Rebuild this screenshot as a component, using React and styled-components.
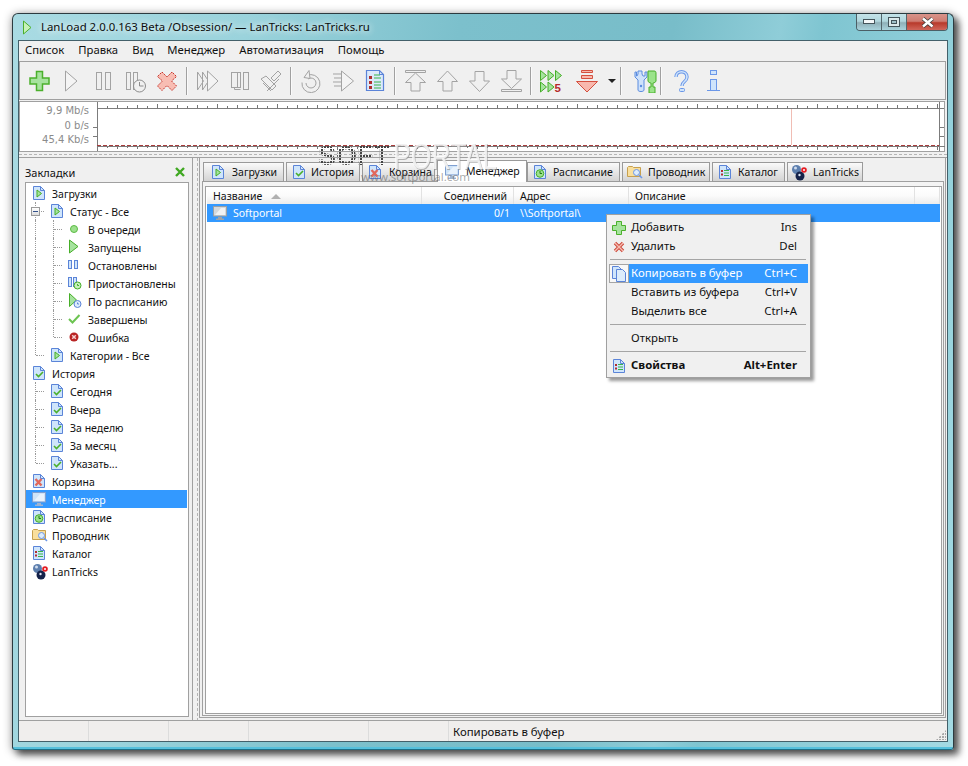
import React from 'react'
import styled, { createGlobalStyle } from 'styled-components'

const Global = createGlobalStyle`
  html, body { margin: 0; background: #fff; }
  body { font: 10.5px/1 "Noto Sans", "Liberation Sans", sans-serif; color: #111; }
`
const Page = styled.div`
  position: relative;
  width: 968px;
  height: 766px;
  padding: 13px 14px 0 12px;
  box-sizing: border-box;
  overflow: hidden;
`
const Frame = styled.div`
  width: 942px;
  height: 737px;
  box-sizing: border-box;
  display: flex;
  flex-direction: column;
  padding: 0 5px 7px;
  border: 1px solid #2c3b40;
  border-bottom-color: #1f6f86;
  border-radius: 6px 6px 3px 3px;
  background:
    linear-gradient(to top, #55c0dc 0 2px, transparent 2px),
    linear-gradient(100deg, #a9dbe3 0%, #9ad3dc 22%, #7cc0cc 42%, #78bdc9 62%, #8fcdd8 72%, #7fc5d1 76%, #a4dae3 100%);
  box-shadow: 0 1px 10px rgba(0, 0, 0, .4), 5px 5px 7px rgba(0, 0, 0, .6);
`
const TitleBar = styled.div`
  height: 26px;
  flex: none;
  display: flex;
  align-items: flex-start;
  justify-content: space-between;
`
const TitleText = styled.div`
  display: flex;
  align-items: center;
  gap: 9px;
  height: 26px;
  padding: 0 0 0 4px;
  font-size: 11.4px;
  color: #0c0c0c;
  text-shadow: 0 0 6px rgba(255, 255, 255, .9), 0 0 10px rgba(255, 255, 255, .8);
`
const WinButtons = styled.div`
  display: flex;
  height: 17px;
  border: 1px solid #4b5f66;
  border-top: 0;
  border-radius: 0 0 4px 4px;
  box-sizing: border-box;
  overflow: hidden;
`
const WinButton = styled.div`
  width: ${p => p.$w}px;
  display: flex;
  align-items: center;
  justify-content: center;
  border-left: ${p => (p.$first ? '0' : '1px solid #53666c')};
  background: ${p => (p.$close
    ? 'linear-gradient(#d9938a 0%, #cf7d72 45%, #b83a2b 55%, #d0665a 100%)'
    : 'linear-gradient(#c4e3e8 0%, #b0d6dd 45%, #8fb0b8 55%, #a9d3dc 100%)')};
`
const Client = styled.div`
  flex: 1;
  display: flex;
  flex-direction: column;
  min-height: 0;
  border: 1px solid #43606a;
  background: #f0f0f0;
`
const MenuBar = styled.div`
  height: 20px;
  flex: none;
  box-sizing: border-box;
  display: flex;
  align-items: center;
  gap: 14px;
  padding: 0 0 2px 6px;
  font-size: 11.3px;
`
const Toolbar = styled.div`
  height: 39px;
  flex: none;
  box-sizing: border-box;
  display: flex;
  align-items: center;
  margin-right: 1px;
  padding-left: 3px;
  border: 1px solid #a0a0a0;
`
const ToolButton = styled.div`
  width: ${p => p.$w || 32}px;
  height: 24px;
  flex: none;
  display: flex;
  align-items: center;
  justify-content: ${p => (p.$end ? 'flex-end' : 'center')};
`
const ToolSep = styled.div`
  width: 2px;
  height: 28px;
  flex: none;
  margin: 0 3px;
  background: #a0a0a0;
  border-right: 1px solid #fafafa;
  box-sizing: border-box;
`
const Graph = styled.div`
  height: 51px;
  flex: none;
  box-sizing: border-box;
  display: flex;
  margin: 1px 2px 0 0;
  border: 1px solid #a0a0a0;
  background: #fff;
`
const GraphLabels = styled.div`
  width: 69px;
  padding: 3px 7px 0 0;
  flex: none;
  display: flex;
  flex-direction: column;
  align-items: flex-end;
  gap: 2.5px;
  font: 10px/12px "DejaVu Sans", sans-serif;
  color: #8b8b8b;
`
const HSplit = styled.div`
  height: 6px;
  flex: none;
  box-sizing: border-box;
  border-bottom: 1px solid #a0a0a0;
  background: repeating-linear-gradient(90deg, #b4b4b4 0 3px, transparent 3px 5px) 0 2px / 100% 1px no-repeat;
`
const Main = styled.div`
  flex: 1;
  display: flex;
  min-height: 0;
`
const SidePanel = styled.div`
  width: 174px;
  flex: none;
  box-sizing: border-box;
  display: flex;
  flex-direction: column;
  padding: 0 3px 3px 6px;
  border-right: 1px solid #a0a0a0;
`
const SideHead = styled.div`
  height: 24px;
  flex: none;
  display: flex;
  align-items: center;
  justify-content: space-between;
  padding: 4px 4px 0 0;
  box-sizing: border-box;
  font-size: 11px;
`
const Tree = styled.div`
  flex: 1;
  padding: 1px 1px 1px 0;
  border: 1px solid #a0a0a0;
  background: #fff;
`
const Row = styled.div`
  position: relative;
  height: 18px;
  display: flex;
  align-items: center;
  background: ${p => (p.$active ? '#3399ff' : 'transparent')};
  color: ${p => (p.$active ? '#fff' : '#111')};
`
const RowText = styled.span`
  padding-top: 2px;
`
const Indent = styled.div`
  position: relative;
  width: 18px;
  height: 18px;
  flex: none;
  &::before {
    content: '';
    display: ${p => (p.$line ? 'block' : 'none')};
    position: absolute;
    left: 9px;
    top: 0;
    height: ${p => (p.$last ? 9 : 18)}px;
    border-left: 1px dotted #9a9a9a;
  }
  &::after {
    content: '';
    display: ${p => (p.$elbow ? 'block' : 'none')};
    position: absolute;
    left: 10px;
    top: 9px;
    width: 8px;
    border-top: 1px dotted #9a9a9a;
  }
`
const RowIcon = styled.div`
  width: 20px;
  height: 16px;
  margin-left: 6px;
  flex: none;
  display: flex;
  align-items: center;
`
const Expander = styled.div`
  position: absolute;
  left: 5px;
  top: 5px;
  width: 9px;
  height: 9px;
  box-sizing: border-box;
  border: 1px solid #9a9a9a;
  background: linear-gradient(#fff, #dcdcdc);
  &::after {
    content: '';
    position: absolute;
    left: 1px;
    top: 3px;
    width: 5px;
    height: 1px;
    background: #33508a;
  }
`
const VSplit = styled.div`
  width: 6px;
  flex: none;
  background: repeating-linear-gradient(180deg, #b4b4b4 0 3px, transparent 3px 5px) 4px 0 / 1px 100% no-repeat;
`
const Outer = styled.div`
  flex: 1;
  display: flex;
  margin: 0 1px 2px 0;
  padding-top: 2px;
  min-width: 0;
  border: 1px solid #a0a0a0;
  border-top: 0;
`
const TabArea = styled.div`
  flex: 1;
  display: flex;
  flex-direction: column;
  padding: 0 1px 1px 2px;
  min-width: 0;
`
const TabStrip = styled.div`
  height: 22px;
  flex: none;
  display: flex;
  align-items: flex-end;
  gap: 2px;
  padding-left: 1px;
  margin-bottom: -1px;
  position: relative;
`
const Tab = styled.div`
  width: ${p => p.$w}px;
  height: ${p => (p.$active ? 22 : 20)}px;
  flex: none;
  box-sizing: border-box;
  display: flex;
  align-items: center;
  gap: ${p => p.$gap}px;
  padding-left: ${p => p.$pad}px;
  margin: ${p => (p.$active ? '0 -2px 0 0' : '0')};
  position: relative;
  border: 1px solid #9a9a9a;
  border-bottom: ${p => (p.$active ? '0' : '1px solid #9a9a9a')};
  background: ${p => (p.$active ? '#fff' : 'linear-gradient(#fafafa, #d3d3d3)')};
`
const TabPanel = styled.div`
  flex: 1;
  display: flex;
  padding: 4px 1px 1px 2px;
  border: 1px solid #a0a0a0;
  background: #f4f4f4;
  min-height: 0;
`
const List = styled.div`
  flex: 1;
  padding: 0 1px;
  border: 1px solid #a0a0a0;
  background: #fff;
  min-width: 0;
`
const HeadRow = styled.div`
  height: 17px;
  display: flex;
  background: linear-gradient(#fff 0%, #fbfbfb 50%, #ececec 100%);
`
const HeadCell = styled.div`
  width: ${p => p.$w}px;
  flex: ${p => (p.$w ? 'none' : '1')};
  box-sizing: border-box;
  display: flex;
  align-items: center;
  justify-content: ${p => (p.$right ? 'flex-end' : 'flex-start')};
  gap: 9px;
  padding: 2px 6px 0;
  border-right: 1px solid #e2e2e2;
`
const ItemRow = styled.div`
  height: 18px;
  display: flex;
  align-items: center;
  background: #3399ff;
  color: #fff;
`
const ItemCell = styled.div`
  width: ${p => p.$w}px;
  flex: none;
  box-sizing: border-box;
  display: flex;
  align-items: center;
  justify-content: ${p => (p.$right ? 'flex-end' : 'flex-start')};
  gap: 6px;
  padding: 0 ${p => (p.$right ? 4 : 6)}px;
`
const SortMark = styled.span`
  width: 0;
  height: 0;
  border: 5px solid transparent;
  border-top: 0;
  border-bottom: 5px solid #b0b0b0;
`
const Menu = styled.div`
  position: absolute;
  left: 606px;
  top: 214px;
  width: 205px;
  box-sizing: border-box;
  padding: 3px 2px 2px;
  border: 1px solid #a0a0a0;
  background: #f0f0f0;
  box-shadow: 3px 3px 3px rgba(0, 0, 0, .4);
  font-size: 11.4px;
`
const MenuRow = styled.div`
  height: 19px;
  display: flex;
  align-items: center;
  font-weight: ${p => (p.$bold ? 700 : 400)};
`
const MenuIcon = styled.div`
  width: 20px;
  height: 19px;
  flex: none;
  box-sizing: border-box;
  display: flex;
  align-items: center;
  justify-content: center;
  border: ${p => (p.$framed ? '1px solid #a5a5a5' : '0')};
  background: ${p => (p.$framed ? '#f8f8f8' : 'transparent')};
`
const MenuLabel = styled.div`
  flex: 1;
  height: 19px;
  box-sizing: border-box;
  display: flex;
  align-items: center;
  justify-content: space-between;
  padding: 0 11px 2px 2px;
  background: ${p => (p.$active ? '#3399ff' : 'transparent')};
  color: ${p => (p.$active ? '#fff' : '#111')};
`
const MenuSep = styled.div`
  height: 1px;
  margin: 3px 2px 4px 1px;
  background: #a5a5a5;
`
const StatusBar = styled.div`
  height: 21px;
  flex: none;
  box-sizing: border-box;
  display: flex;
  border-top: 1px solid #a0a0a0;
  background: #f0eeed;
  font-size: 11.4px;
`
const StatusCell = styled.div`
  width: ${p => p.$w}px;
  flex: ${p => (p.$w ? 'none' : '1')};
  box-sizing: border-box;
  display: flex;
  align-items: center;
  padding: 2px 0 0 4px;
  border-right: ${p => (p.$w ? '1px solid #dcdcdc' : '0')};
`
const Grip = styled.div`
  width: 10px;
  height: 10px;
  align-self: flex-end;
  margin: 0 1px 1px 0;
  background: radial-gradient(circle at 1px 1px, #a8a8a8 1px, transparent 1px) 0 0 / 3px 3px;
  clip-path: polygon(100% 0, 100% 100%, 0 100%);
`
const Portal = styled.div`
  position: absolute;
  left: 393px;
  top: 138px;
  font: 400 37px/37px "Liberation Sans", sans-serif;
  color: rgba(255, 255, 255, .8);
  text-shadow: 1px 1px 0 rgba(150, 150, 150, .7);
  transform: scaleX(.72);
  transform-origin: left top;
  pointer-events: none;
`
const PortalDots = styled.div`
  position: absolute;
  left: 318px;
  top: 143px;
  font: 700 27px/27px "Liberation Sans", sans-serif;
  color: transparent;
  background: radial-gradient(circle at 1px 1px, #444 1px, transparent 1.5px) 0 0 / 3px 3px;
  -webkit-background-clip: text;
  background-clip: text;
  pointer-events: none;
`
const PortalUrl = styled.div`
  position: absolute;
  left: 361px;
  top: 170px;
  font-size: 11.5px;
  line-height: 14px;
  color: rgba(95, 95, 95, .55);
  pointer-events: none;
`

const G = '#a3a3a3'
const Svg = ({ w = 24, h = 24, children }) => (
  <svg width={w} height={h} viewBox={`0 0 ${w} ${h}`} fill="none" style={{ display: 'block' }}>{children}</svg>
)
const Clock = ({ x, y, r = 5.5, c = '#8c8c8c', f = '#f0f0f0' }) => (
  <>
    <circle cx={x} cy={y} r={r} fill={f} stroke={c} />
    <path d={`M${x} ${y - r + 2}v${r - 2}h${r - 2}`} stroke={c} />
  </>
)

const tool = {
  plus: <path d="M9.5 2.5h6v6.5h6.5v6h-6.5v6.5h-6v-6.5H3v-6h6.5z" fill="#a6e39e" stroke="#4bb02c" strokeWidth="1.5" />,
  play: <path d="M6.5 2v20L18 12z" stroke={G} fill="#f4f4f4" />,
  pause: <><rect x="5.5" y="3.5" width="5" height="17" stroke={G} /><rect x="14.5" y="3.5" width="5" height="17" stroke={G} /></>,
  hold: <><rect x="3.5" y="3.5" width="4" height="17" stroke={G} /><rect x="10.5" y="3.5" width="4" height="17" stroke={G} /><Clock x={16.5} y={17} r={6} /></>,
  cross: <path d="M7 3l5 5 5-5 4.5 4.5-5 4.5 5 5L17 21.5l-5-5-5 5L2.5 17l5-5-5-4.5z" fill="#f8bdb3" stroke="#c8352b" strokeDasharray="2 1" />,
  play3: <><path d="M2.5 3v18l6-9z" stroke={G} /><path d="M7.5 3v18l6-9z" stroke={G} /><path d="M12.5 2v20L23 12z" stroke={G} fill="#f4f4f4" /></>,
  pause2: <><rect x="4.5" y="3.5" width="6" height="15" stroke={G} /><rect x="10.5" y="3.5" width="3" height="15" stroke={G} /><rect x="16.5" y="3.5" width="5" height="17" stroke={G} /><path d="M7.5 18.5v2h6" stroke={G} /></>,
  clean: <><path d="M2 10l5-3 10 10-4 4z" stroke={G} /><path d="M12 9l7-7 3 3-7 7z" stroke={G} /><path d="M8 22l12-12M4 14l8 8" stroke={G} /></>,
  again: <><path d="M8 6.5a9 9 0 1 1-5 7" stroke={G} /><path d="M9 10a5 5 0 1 1-2 4" stroke={G} /><path d="M5 8.5l5-7 1 8z" fill="#f0f0f0" stroke={G} /></>,
  flow: <><path d="M10.5 2v20L22.5 12z" stroke={G} fill="#f4f4f4" /><path d="M2 5h8M3 9h7M2 13h8M3 17h7" stroke={G} /></>,
  list: <><path d="M3.5 1.5h13l4 4v16h-17z" fill="#dce9fb" stroke="#5b84d8" strokeWidth="1.2" /><path d="M16.5 1.5v4h4" stroke="#5b84d8" /><path d="M6 7h3v3H6zM6 12h3v3H6zM6 17h3v3H6z" fill="#b03030" /><path d="M11 6h6M11 9h7M11 13h7M11 16h7M11 19h7" stroke="#39b54a" /></>,
  top: <><path d="M2.5 1.5h20v2h-20z" stroke={G} /><path d="M12.5 4l10 9.5h-5.5v8.5h-9v-8.5H2.5z" stroke={G} /></>,
  up: <path d="M12.5 2l10 10.5h-5.5v9.5h-9v-9.5H2.5z" stroke={G} />,
  down: <path d="M8 2.5h9v9.5h5.500l-10 10.500-10-10.500H8z" stroke={G} />,
  bottom: <><path d="M8 1.5h9v8.500h5.500l-10 9.500-10-9.500H8z" stroke={G} /><path d="M2.5 20.500h20v2h-20z" stroke={G} /></>,
  five: (
    <>
      <path d="M1.5 1.500v10l6-5zM9 1.500v10l6-5zM16.500 1.500v10l6-5zM1.500 13v10l6-5zM9 13v10l6-5z" fill="#a6e39e" stroke="#46ae28" />
      <text x="15.500" y="22.500" fill="#b52a2a" style={{ font: '700 11.5px "Liberation Sans", sans-serif' }}>5</text>
    </>
  ),
  dump: <><path d="M6.500 1.500h11v2h-11zM6.500 6.500h11v3h-11z" fill="#f8b9ae" stroke="#d4503f" /><path d="M1.500 12.500h21L12 23z" fill="#f8b9ae" stroke="#d4503f" /></>,
  caret: <path d="M0 0h8L4 4z" fill="#222" />,
  tools: (
    <>
      <path d="M2 3v5l3 3v10c0 2 6 2 6 0V11l3-3V3l-2 0v4h-2l-1-2V2H5v3L4 7H3.500V3z" fill="#cfe2fb" stroke="#5b8ce0" />
      <circle cx="8" cy="17" r="1.200" fill="#5b8ce0" />
      <path d="M15 2h6c2 0 2 1 2 3v7c0 1-2 2-3 2v4h2v6h-6v-6h2v-4c-1 0-3-1-3-2z" fill="#9be38a" stroke="#46ae28" />
    </>
  ),
  help: (
    <>
      <path d="M7 8c0-7 11-7 11 0 0 5-5 4-5 9" stroke="#6b97e8" strokeWidth="3.400" />
      <path d="M7 8c0-7 11-7 11 0 0 5-5 4-5 9" stroke="#cfe4fb" strokeWidth="1.600" />
      <rect x="10.500" y="19.500" width="5" height="3" rx="1" fill="#cfe4fb" stroke="#6b97e8" />
    </>
  ),
  info: <><rect x="9.500" y="1.500" width="6" height="4" fill="#cfe4fb" stroke="#6b97e8" /><rect x="9.500" y="10.500" width="6" height="11" fill="#cfe4fb" stroke="#6b97e8" /><path d="M6 21.500h13" stroke="#6b97e8" /></>,
}

const Tool = ({ name, w, end, size = 24 }) => (
  <ToolButton $w={w} $end={end}><Svg w={size} h={size}>{tool[name]}</Svg></ToolButton>
)

const Doc = ({ children }) => (
  <Svg w={14} h={14}>
    <path d="M1.500 .5h7l4 4v9h-11z" fill="#cfe5fb" stroke="#5b84d8" />
    <path d="M8.500 .5v4h4" stroke="#5b84d8" />
    {children}
  </Svg>
)
const CheckMark = ({ c = '#4bb02c' }) => <path d="M4 8l2.500 2.500L11 6" stroke={c} strokeWidth="1.600" />

const Monitor = ({ muted }) => (
  <Svg w={14} h={14}>
    <rect x=".5" y=".5" width="13" height="9.500" fill={muted ? '#d5d9dc' : '#cfe4f8'} stroke={muted ? '#9aa0a4' : '#7f9fd0'} />
    <path d="M2 9l6-7h4v7z" fill={muted ? '#f0f2f3' : '#e8f2fc'} />
    <path d="M5 11h4v1.500h2V14H3v-1.500h2z" fill={muted ? '#9fa3a6' : '#9fb4d0'} />
  </Svg>
)

const Folder = () => (
  <Svg w={16} h={14}>
    <path d="M.5 2.500l1-1h4l1 1h7v9H.5z" fill="#f9df9d" stroke="#c7a04e" />
    <circle cx="9.500" cy="7.500" r="3" fill="#dcecfb" stroke="#6b97e8" />
    <path d="M12 10l3 3" stroke="#6b97e8" strokeWidth="1.600" />
  </Svg>
)

const Balls = () => (
  <Svg w={17} h={17}>
    <circle cx="5.500" cy="5.500" r="4.500" fill="#5d7fae" />
    <circle cx="4.500" cy="4" r="1.500" fill="#cfdcee" />
    <circle cx="9" cy="12" r="4.500" fill="#14224a" />
    <circle cx="8.500" cy="11" r="1.200" fill="#dfe7f5" />
    <circle cx="13" cy="6" r="2.800" fill="#e51c23" />
    <circle cx="13" cy="6" r="1" fill="#fff" />
  </Svg>
)

const small = {
  load: <Doc><path d="M5 4v7l4.500-3.500z" fill="#a6e39e" stroke="#46ae28" /></Doc>,
  done: <Doc><CheckMark /></Doc>,
  trash: <Doc><path d="M3.500 5l6 6.500M9.500 5l-6 6.500" stroke="#e2675a" strokeWidth="2.400" /></Doc>,
  clock: <Doc><circle cx="7" cy="8.500" r="3.800" fill="#9de08d" stroke="#46ae28" /><path d="M7 6v2.500h2" stroke="#1f7d1a" /></Doc>,
  list: <Doc><path d="M3 5h2v2H3zM3 8.500h2v2H3z" fill="#b03030" /><path d="M6 5.500h5M6 8h5M6 10.500h5" stroke="#39b54a" /></Doc>,
  queue: <Svg w={14} h={14}><circle cx="6" cy="7" r="3.500" fill="#9de08d" stroke="#5cbb45" /></Svg>,
  run: <Svg w={14} h={16}><path d="M1.500 1v13L10 7.500z" fill="#a6e39e" stroke="#46ae28" /></Svg>,
  stop: <Svg w={14} h={14}><rect x=".5" y="2.500" width="3" height="8" fill="#cfe5fb" stroke="#5b84d8" /><rect x="6.500" y="2.500" width="3" height="8" fill="#cfe5fb" stroke="#5b84d8" /></Svg>,
  hold: <Svg w={14} h={14}><rect x=".5" y="1.500" width="3" height="9" fill="#cfe5fb" stroke="#5b84d8" /><rect x="5.500" y="1.500" width="3" height="9" fill="#cfe5fb" stroke="#5b84d8" /><Clock x={9.500} y={9.500} r={3.500} c="#46ae28" f="#c8f0bc" /></Svg>,
  plan: <Svg w={14} h={16}><path d="M1.500 .5v13L8.500 7z" fill="#a6e39e" stroke="#46ae28" /><Clock x={9.500} y={11} r={3.500} c="#5b84d8" f="#dcecfb" /></Svg>,
  ok: <Svg w={14} h={14}><path d="M1 7l3.500 3.500L11.500 3" stroke="#6cc451" strokeWidth="2" /></Svg>,
  err: <Svg w={14} h={14}><circle cx="6" cy="7" r="4.500" fill="#b92424" /><path d="M4.200 5.200l3.600 3.600M7.800 5.200l-3.600 3.600" stroke="#f6d0d0" strokeWidth="1.500" /></Svg>,
  mon: <Monitor />,
  folder: <Folder />,
  balls: <Balls />,
}

const Ticks = () => {
  const xs = []
  for (let x = 1; x <= 843; x += 10) xs.push(x)
  const tall = x => ((x - 1) % 60 === 0 ? 4 : (x - 1) % 20 === 0 ? 3 : 2)
  return (
    <svg width="849" height="49" fill="none" style={{ display: 'block', flex: 'none', overflow: 'visible' }} shapeRendering="crispEdges">
      {xs.map(x => <path key={x} d={`M${x + .5} ${6 - tall(x)}v${tall(x)}M${x + .5} 44v${tall(x)}`} stroke="#777" />)}
      <path d="M1 6.500H843.500V44.500H1M1.500 0V49M843.500 0V49M843.500 44.500H849" stroke="#7c7c7c" />
      <path d="M1 43.500H843" stroke="#a83c3c" strokeDasharray="4 2" />
      <path d="M695.500 7V43" stroke="#f0bdb4" />
      <path d="M-3 25.500h4M-3 34.500h4M844 25.500h4M844 34.500h4M844 6.500h4" stroke="#7c7c7c" />
    </svg>
  )
}

const treeRows = [
  { icon: 'load', text: 'Загрузки' },
  { icon: 'load', text: 'Статус - Все', guides: ['elbow'], open: true },
  { icon: 'queue', text: 'В очереди', guides: ['line', 'elbow'] },
  { icon: 'run', text: 'Запущены', guides: ['line', 'elbow'] },
  { icon: 'stop', text: 'Остановлены', guides: ['line', 'elbow'] },
  { icon: 'hold', text: 'Приостановлены', guides: ['line', 'elbow'] },
  { icon: 'plan', text: 'По расписанию', guides: ['line', 'elbow'] },
  { icon: 'ok', text: 'Завершены', guides: ['line', 'elbow'] },
  { icon: 'err', text: 'Ошибка', guides: ['line', 'last'] },
  { icon: 'load', text: 'Категории - Все', guides: ['last'] },
  { icon: 'done', text: 'История' },
  { icon: 'done', text: 'Сегодня', guides: ['elbow'] },
  { icon: 'done', text: 'Вчера', guides: ['elbow'] },
  { icon: 'done', text: 'За неделю', guides: ['elbow'] },
  { icon: 'done', text: 'За месяц', guides: ['elbow'] },
  { icon: 'done', text: 'Указать...', guides: ['last'] },
  { icon: 'trash', text: 'Корзина' },
  { icon: 'mon', text: 'Менеджер', active: true },
  { icon: 'clock', text: 'Расписание' },
  { icon: 'folder', text: 'Проводник' },
  { icon: 'list', text: 'Каталог' },
  { icon: 'balls', text: 'LanTricks' },
]

const tabs = [
  { icon: 'load', text: 'Загрузки', w: 81, pad: 7, gap: 7 },
  { icon: 'done', text: 'История', w: 74, pad: 5, gap: 5 },
  { icon: 'trash', text: 'Корзина', w: 73, pad: 5, gap: 7 },
  { icon: 'mon', text: 'Менеджер', w: 90, pad: 7, gap: 7, active: true },
  { icon: 'clock', text: 'Расписание', w: 93, pad: 5, gap: 6 },
  { icon: 'folder', text: 'Проводник', w: 88, pad: 4, gap: 5 },
  { icon: 'list', text: 'Каталог', w: 73, pad: 5, gap: 6 },
  { icon: 'balls', text: 'LanTricks', w: 76, pad: 3, gap: 5 },
]

const App = () => (
  <Page>
    <Global />
    <Frame>
      <TitleBar>
        <TitleText>
          <Svg w={10} h={15}><path d="M1.500 1v13L9 7.500z" fill="#c8f2b8" stroke="#4bb02c" /></Svg>
          LanLoad 2.0.0.163 Beta /Obsession/ — LanTricks: LanTricks.ru
        </TitleText>
        <WinButtons>
          <WinButton $w={24} $first>
            <Svg w={12} h={6}><rect x=".5" y=".5" width="11" height="4" fill="#f4f8f9" stroke="#44545a" /></Svg>
          </WinButton>
          <WinButton $w={24}>
            <Svg w={12} h={10}><rect x=".5" y=".5" width="11" height="9" fill="#dbe8ea" stroke="#44545a" /><rect x="3.500" y="3.500" width="5" height="3" fill="#9fc0c8" stroke="#44545a" /></Svg>
          </WinButton>
          <WinButton $w={40} $close>
            <Svg w={13} h={11}><path d="M2 1.500l9.500 8M11.500 1.500L2 9.500" stroke="#3c3c3c" strokeWidth="4" /><path d="M2 1.500l9.500 8M11.500 1.500L2 9.500" stroke="#fff" strokeWidth="2.500" /></Svg>
          </WinButton>
        </WinButtons>
      </TitleBar>
      <Client>
        <MenuBar>
          <span>Список</span>
          <span>Правка</span>
          <span>Вид</span>
          <span>Менеджер</span>
          <span>Автоматизация</span>
          <span>Помощь</span>
        </MenuBar>
        <Toolbar>
          <Tool name="plus" /><Tool name="play" /><Tool name="pause" /><Tool name="hold" /><Tool name="cross" />
          <ToolSep />
          <Tool name="play3" /><Tool name="pause2" /><Tool name="clean" />
          <ToolSep />
          <Tool name="again" /><Tool name="flow" /><Tool name="list" />
          <ToolSep />
          <Tool name="top" /><Tool name="up" /><Tool name="down" /><Tool name="bottom" />
          <ToolSep />
          <Tool name="five" /><Tool name="dump" w={40} />
          <ToolButton $w={10}><Svg w={8} h={4}>{tool.caret}</Svg></ToolButton>
          <ToolSep />
          <Tool name="tools" end />
          <ToolSep />
          <Tool name="help" /><Tool name="info" />
        </Toolbar>
        <Graph>
          <GraphLabels>
            <span>9,9 Mb/s</span>
            <span>0 b/s</span>
            <span>45,4 Kb/s</span>
          </GraphLabels>
          <Ticks />
        </Graph>
        <HSplit />
        <Main>
          <SidePanel>
            <SideHead>
              Закладки
              <Svg w={10} h={10}><path d="M1 1l8 8M9 1l-8 8" stroke="#3fa821" strokeWidth="2.400" /></Svg>
            </SideHead>
            <Tree>
              {treeRows.map(r => (
                <Row key={r.text} $active={r.active}>
                  {(r.guides || []).map((g, i) => (
                    <Indent key={i} $line $elbow={g !== 'line'} $last={g === 'last'} />
                  ))}
                  {r.open && <Expander />}
                  <RowIcon>{small[r.icon]}</RowIcon>
                  <RowText>{r.text}</RowText>
                </Row>
              ))}
            </Tree>
          </SidePanel>
          <VSplit />
          <Outer>
            <TabArea>
              <TabStrip>
                {tabs.map(t => (
                  <Tab key={t.text} $w={t.w} $pad={t.pad} $gap={t.gap} $active={t.active}>
                    {small[t.icon]}
                    {t.text}
                  </Tab>
                ))}
              </TabStrip>
              <TabPanel>
                <List>
                  <HeadRow>
                    <HeadCell $w={215}>Название <SortMark /></HeadCell>
                    <HeadCell $w={92} $right>Соединений</HeadCell>
                    <HeadCell $w={115}>Адрес</HeadCell>
                    <HeadCell $w={286}>Описание</HeadCell>
                    <HeadCell />
                  </HeadRow>
                  <ItemRow>
                    <ItemCell $w={215}><Monitor muted /> Softportal</ItemCell>
                    <ItemCell $w={92} $right>0/1</ItemCell>
                    <ItemCell $w={115}>\\Softportal\</ItemCell>
                  </ItemRow>
                </List>
              </TabPanel>
            </TabArea>
          </Outer>
        </Main>
        <StatusBar>
          <StatusCell $w={70} />
          <StatusCell $w={80} />
          <StatusCell $w={80} />
          <StatusCell $w={120} />
          <StatusCell $w={80} />
          <StatusCell>Копировать в буфер</StatusCell>
          <Grip />
        </StatusBar>
      </Client>
    </Frame>

    <PortalDots>SOFT</PortalDots>
    <Portal>PORTAL</Portal>
    <PortalUrl>www.softportal.com</PortalUrl>

    <Menu>
      <MenuRow>
        <MenuIcon><Svg w={16} h={16}><path d="M5.500 1.500h5v4h4v5h-4v4h-5v-4h-4v-5h4z" fill="#a6e39e" stroke="#4bb02c" /></Svg></MenuIcon>
        <MenuLabel><span>Добавить</span><span>Ins</span></MenuLabel>
      </MenuRow>
      <MenuRow>
        <MenuIcon><Svg w={12} h={12}><path d="M2 2l8 8M10 2l-8 8" stroke="#cc4a3c" strokeWidth="3.400" /><path d="M2 2l8 8M10 2l-8 8" stroke="#f8bdb3" strokeWidth="1.400" /></Svg></MenuIcon>
        <MenuLabel><span>Удалить</span><span>Del</span></MenuLabel>
      </MenuRow>
      <MenuSep />
      <MenuRow>
        <MenuIcon $framed>
          <Svg w={16} h={16}>
            <path d="M1.500 .5h6l3 3v9h-9z" fill="#cfe5fb" stroke="#5b84d8" />
            <path d="M5.500 3.500h6l3 3v9h-9z" fill="#dcecfb" stroke="#5b84d8" />
          </Svg>
        </MenuIcon>
        <MenuLabel $active><span>Копировать в буфер</span><span>Ctrl+C</span></MenuLabel>
      </MenuRow>
      <MenuRow>
        <MenuIcon />
        <MenuLabel><span>Вставить из буфера</span><span>Ctrl+V</span></MenuLabel>
      </MenuRow>
      <MenuRow>
        <MenuIcon />
        <MenuLabel><span>Выделить все</span><span>Ctrl+A</span></MenuLabel>
      </MenuRow>
      <MenuSep />
      <MenuRow>
        <MenuIcon />
        <MenuLabel><span>Открыть</span></MenuLabel>
      </MenuRow>
      <MenuSep />
      <MenuRow $bold>
        <MenuIcon>{small.list}</MenuIcon>
        <MenuLabel><span>Свойства</span><span>Alt+Enter</span></MenuLabel>
      </MenuRow>
    </Menu>
  </Page>
)

export default App
